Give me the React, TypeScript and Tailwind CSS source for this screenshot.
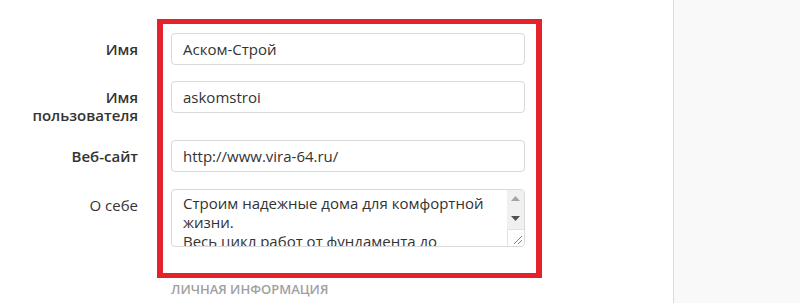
export default function App() {
  return (
    <div className="relative flex h-[303px] w-[800px] overflow-hidden bg-white font-['Open_Sans',sans-serif] text-[15px] text-[#333]">
      <div className="relative w-[673px] shrink-0">
        <form className="flex flex-col pt-[33px]">
          <FieldRow label="Имя" bold>
            <Input value="Аском-Строй" />
          </FieldRow>
          <FieldRow label="Имя" label2="пользователя" bold className="mt-[16px]">
            <Input value="askomstroi" />
          </FieldRow>
          <FieldRow label="Веб-сайт" bold className="mt-[16px]">
            <Input value="http://www.vira-64.ru/" />
          </FieldRow>
          <FieldRow label="О себе" className="mt-[17px]">
            <FakeTextarea />
          </FieldRow>
        </form>

        <div className="mt-[36px] pl-[171px] text-[13px] font-semibold uppercase leading-none text-[#a0a0a0]">
          Личная информация
        </div>

        {/* red highlight frame drawn over the form */}
        <div className="pointer-events-none absolute left-[157px] top-[19px] h-[259px] w-[385px] border-x-[6px] border-y-[5px] border-[#e4222a]" />
      </div>

      <div className="flex-1 border-l border-[#dcdcdc] bg-[#f9f9f9]" />
    </div>
  );
}

function FieldRow({
  label,
  label2,
  bold,
  className = "",
  children,
}: {
  label: string;
  label2?: string;
  bold?: boolean;
  className?: string;
  children: React.ReactNode;
}) {
  return (
    <div className={`flex items-start ${className}`}>
      <label
        className={`w-[138px] shrink-0 pt-[7px] text-right leading-[18px] ${bold ? "font-semibold" : "font-normal"}`}
      >
        {label}
        {label2 && (
          <>
            <br />
            {label2}
          </>
        )}
      </label>
      <div className="ml-[33px] w-[354px]">{children}</div>
    </div>
  );
}

function Input({ value }: { value: string }) {
  return (
    <div className="flex h-[32px] items-center rounded-[4px] border border-[#d9d9d9] bg-white px-[11px] text-[#333]">
      {value}
    </div>
  );
}

function FakeTextarea() {
  return (
    <div className="flex h-[58px] overflow-hidden rounded-[4px] border border-[#d9d9d9] bg-white">
      <div className="flex-1 overflow-hidden whitespace-nowrap px-[11px] pt-[4px] leading-[19px] text-[#333]">
        Строим надежные дома для комфортной
        <br />
        жизни.
        <br />
        Весь цикл работ от фундамента до
      </div>
      <div className="flex w-[17px] shrink-0 flex-col bg-[#f0f0f0]">
        <div className="flex h-[17px] items-center justify-center">
          <svg width="9" height="5" viewBox="0 0 9 5">
            <path d="M0 5 L4.5 0 L9 5 Z" fill="#a3a3a3" />
          </svg>
        </div>
        <div className="flex h-[22px] items-center justify-center">
          <svg width="9" height="5" viewBox="0 0 9 5">
            <path d="M0 0 L4.5 5 L9 0 Z" fill="#505050" />
          </svg>
        </div>
        <div className="relative flex-1 border-l border-t border-[#e2e2e2] bg-white">
          <svg className="absolute bottom-[2px] right-[2px]" width="9" height="9" viewBox="0 0 9 9">
            <path d="M1 9 L9 1 M5 9 L9 5" stroke="#8a8a8a" strokeWidth="1" />
          </svg>
        </div>
      </div>
    </div>
  );
}
